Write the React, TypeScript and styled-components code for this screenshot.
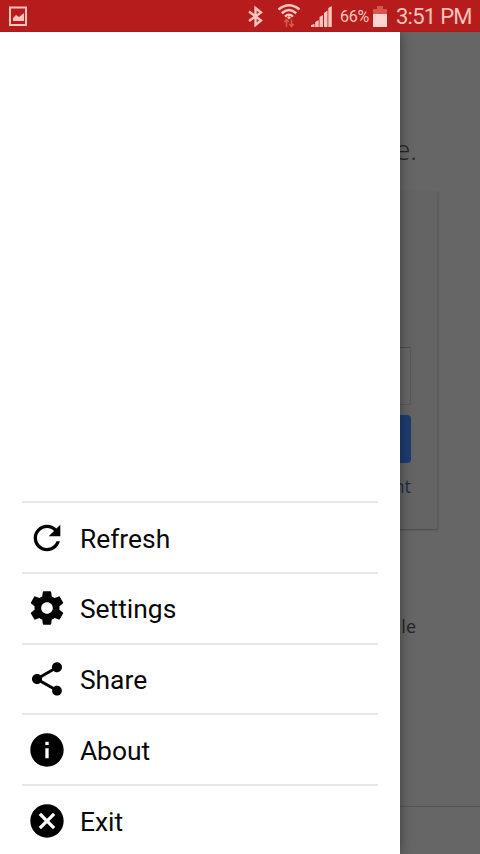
import React from "react";
import styled, { createGlobalStyle } from "styled-components";

const Global = createGlobalStyle`
  * { box-sizing: border-box; }
  body { margin: 0; overflow: hidden; background: #666; font-family: Roboto, "Noto Sans", sans-serif; }
`;

const Screen = styled.div`
  position: relative;
  width: 480px;
  height: 854px;
  display: flex;
  flex-direction: column;
  overflow: hidden;
`;

const StatusBar = styled.header`
  height: 32px;
  flex: none;
  display: flex;
  align-items: center;
  padding: 0 8px;
  background: #b71c1c;
  border-bottom: 1px solid #a51d1c;
  color: #fbc4bc;
`;

const StatusIcon = styled.svg<{ $gap?: number }>`
  display: block;
  flex: none;
  margin-left: ${(p) => p.$gap ?? 0}px;
`;

const Spacer = styled.div`
  flex: 1;
`;

const Percent = styled.span`
  width: 30px;
  margin-left: 8px;
  font-size: 16px;
  letter-spacing: -0.3px;
  line-height: 32px;
  padding-top: 2px;
  white-space: nowrap;
`;

const Clock = styled.span`
  width: 76px;
  margin-left: 9px;
  font-size: 22px;
  letter-spacing: -0.75px;
  line-height: 32px;
  padding-top: 3px;
  white-space: nowrap;
`;

const Body = styled.div`
  position: relative;
  flex: 1;
  display: flex;
  flex-direction: column;
  overflow: hidden;
`;

const Page = styled.main`
  flex: 1;
  display: flex;
  flex-direction: column;
  background: #666;
  color: #252525;
`;

const Heading = styled.h1`
  margin: 100px 63px 0 0;
  height: 59px;
  font: 300 28px/34px "Open Sans", sans-serif;
  text-align: right;
`;

const Card = styled.section`
  width: 396px;
  height: 338px;
  margin: 0 auto;
  padding: 156px 26px 0;
  display: flex;
  flex-direction: column;
  background: #646464;
  border-radius: 2px;
  border-right: 1px solid #5c5c5c;
  box-shadow: 0 1px 2px rgba(0, 0, 0, 0.3);
`;

const Field = styled.div`
  height: 58px;
  border: 1px solid #595959;
  border-top-color: #4c4c4c;
  background: #666;
`;

const Button = styled.div`
  height: 48px;
  margin-top: 10px;
  border-radius: 4px;
  background: #1d3c70;
`;

const CardLink = styled.div`
  margin-top: 10px;
  font: 18px/26px "Open Sans", sans-serif;
  color: #1f2d4c;
  text-align: right;
`;

const Tagline = styled.p`
  margin: 83px 64px 0 0;
  font: 18px/28px "Open Sans", sans-serif;
  text-align: right;
`;

const Footer = styled.footer`
  height: 48px;
  margin-top: auto;
  border-top: 1px solid #555;
`;

const Drawer = styled.aside`
  position: absolute;
  inset: 0 auto 0 0;
  width: 400px;
  display: flex;
  flex-direction: column;
  justify-content: flex-end;
  padding: 0 22px;
  background: #fff;
  box-shadow: 0 0 12px rgba(0, 0, 0, 0.42);
`;

const Menu = styled.nav`
  display: flex;
  flex-direction: column;
  height: 352.6px;
`;

const MenuItem = styled.div`
  flex: none;
  height: 70.7px;
  display: flex;
  align-items: center;
  padding-left: 4.6px;
  border-top: 2px solid #e7e7e7;
  color: #080808;
`;

const Icon = styled.svg`
  width: 40px;
  height: 40px;
  flex: none;
  fill: #000;
`;

const Label = styled.span`
  margin-left: 13.3px;
  padding-top: 2px;
  font-size: 26.4px;
  line-height: 32px;
`;

const items = [
  {
    label: "Refresh",
    d: "M17.65 6.35C16.2 4.9 14.21 4 12 4c-4.42 0-7.99 3.58-7.99 8s3.57 8 7.99 8c3.73 0 6.84-2.55 7.73-6h-2.08c-.82 2.33-3.04 4-5.65 4-3.31 0-6-2.69-6-6s2.69-6 6-6c1.66 0 3.14.69 4.22 1.78L13 11h7V4l-2.35 2.35z",
  },
  {
    label: "Settings",
    d: "M19.43 12.98c.04-.32.07-.64.07-.98s-.03-.66-.07-.98l2.11-1.65c.19-.15.24-.42.12-.64l-2-3.46c-.12-.22-.39-.3-.61-.22l-2.49 1c-.52-.4-1.08-.73-1.69-.98l-.38-2.65C14.46 2.18 14.25 2 14 2h-4c-.25 0-.46.18-.49.42l-.38 2.65c-.61.25-1.17.59-1.69.98l-2.49-1c-.23-.09-.49 0-.61.22l-2 3.46c-.13.22-.07.49.12.64l2.11 1.65c-.04.32-.07.65-.07.98s.03.66.07.98l-2.11 1.65c-.19.15-.24.42-.12.64l2 3.46c.12.22.39.3.61.22l2.49-1c.52.4 1.08.73 1.69.98l.38 2.65c.03.24.24.42.49.42h4c.25 0 .46-.18.49-.42l.38-2.65c.61-.25 1.17-.59 1.69-.98l2.49 1c.23.09.49 0 .61-.22l2-3.46c.12-.22.07-.49-.12-.64l-2.11-1.65zM12 15.5c-1.93 0-3.5-1.57-3.5-3.5s1.57-3.5 3.5-3.5 3.5 1.57 3.5 3.5-1.57 3.5-3.5 3.5z",
  },
  {
    label: "Share",
    d: "M18 16.08c-.76 0-1.44.3-1.96.77L8.91 12.7c.05-.23.09-.46.09-.7s-.04-.47-.09-.7l7.05-4.11c.54.5 1.25.81 2.04.81 1.66 0 3-1.34 3-3s-1.34-3-3-3-3 1.34-3 3c0 .24.04.47.09.7L8.04 9.81C7.5 9.31 6.79 9 6 9c-1.66 0-3 1.34-3 3s1.34 3 3 3c.79 0 1.5-.31 2.04-.81l7.12 4.16c-.05.21-.08.43-.08.65 0 1.61 1.31 2.92 2.92 2.92s2.92-1.31 2.92-2.92-1.31-2.92-2.92-2.92z",
  },
  {
    label: "About",
    d: "M12 2C6.48 2 2 6.48 2 12s4.48 10 10 10 10-4.48 10-10S17.52 2 12 2zm1 15h-2v-6h2v6zm0-8h-2V7h2v2z",
  },
  {
    label: "Exit",
    d: "M12 2C6.47 2 2 6.47 2 12s4.47 10 10 10 10-4.47 10-10S17.53 2 12 2zm5 13.59L15.59 17 12 13.41 8.41 17 7 15.59 10.59 12 7 8.41 8.41 7 12 10.59 15.59 7 17 8.41 13.41 12 17 15.59z",
  },
];

export default function App() {
  return (
    <Screen>
      <Global />
      <StatusBar>
        <StatusIcon width="19" height="20" viewBox="0 0 19 20">
          <rect x="2" y="1.5" width="16" height="17.5" fill="none" stroke="currentColor" strokeWidth="2" />
          <path d="M5 15v-3l3-3 3 2 5-4v8z" fill="currentColor" />
        </StatusIcon>
        <Spacer />
        <StatusIcon width="16" height="22" viewBox="0 0 16 22">
          <path d="M2 6.5l12 9L8.500 20V3l5.500 4.500L2 16" fill="none" stroke="currentColor" strokeWidth="2.4" />
        </StatusIcon>
        <StatusIcon $gap={14} width="24" height="25" viewBox="0 0 24 25">
          <g fill="none" stroke="currentColor" strokeWidth="2.5">
            <path d="M1.5 6.5Q12 -2 22.5 6.5" />
            <path d="M4.8 10.2Q12 3.8 19.2 10.2" />
            <path d="M8 13.6Q12 10 16 13.6" />
          </g>
          <path d="M10 14.5L12 16.5L14 14.5L12 13z" fill="currentColor" />
          <path d="M9.5 24v-7M7.3 19l2.2-2.5 2.2 2.5M14.5 16.5v7M12.3 21l2.2 2.5 2.2-2.5" fill="none" stroke="#d9594f" strokeWidth="1.5" />
        </StatusIcon>
        <StatusIcon $gap={10} width="21" height="22" viewBox="0 0 21 22">
          <path d="M0 22v-2l3.5-1v3zM4.2 22v-5l3.5-2v7zM8.5 22v-10l3.5-2v12zM13 22v-14l3.5-2.500v16.500zM17.3 22V3l3.500-2v21z" fill="currentColor" />
        </StatusIcon>
        <Percent>66%</Percent>
        <StatusIcon $gap={3} width="14" height="22" viewBox="0 0 14 22">
          <path d="M4 1h6v3h4v5H0V4h4z" fill="#d9554d" />
          <path d="M0 9h14v13H0z" fill="#ffd6cf" />
        </StatusIcon>
        <Clock>3:51 PM</Clock>
      </StatusBar>
      <Body>
        <Page>
          <Heading>e.</Heading>
          <Card>
            <Field />
            <Button />
            <CardLink>nt</CardLink>
          </Card>
          <Tagline>le</Tagline>
          <Footer />
        </Page>
        <Drawer>
          <Menu>
            {items.map((item) => (
              <MenuItem key={item.label}>
                <Icon viewBox="0 0 24 24">
                  <path d={item.d} />
                </Icon>
                <Label>{item.label}</Label>
              </MenuItem>
            ))}
          </Menu>
        </Drawer>
      </Body>
    </Screen>
  );
}
